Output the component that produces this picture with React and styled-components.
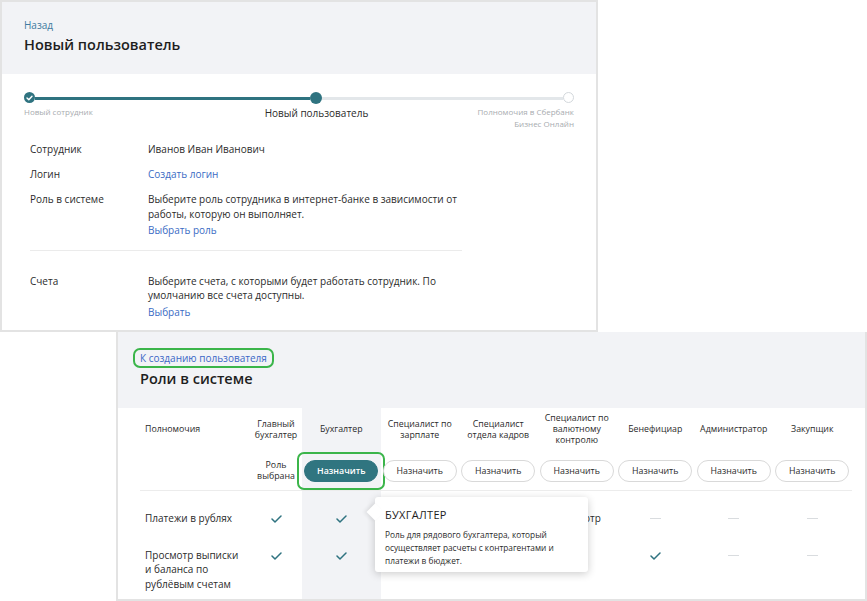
import React from 'react';
import styled, { createGlobalStyle } from 'styled-components';

const GlobalStyle = createGlobalStyle`
  body {
    margin: 0;
    background: #ffffff;
    font-family: "Open Sans", "Noto Sans", Arial, sans-serif;
    color: #2b2b2b;
  }
  * { box-sizing: border-box; }
`;

const Page = styled.div`
  width: 867px;
  height: 601px;
  overflow: hidden;
`;

const Window = styled.div`
  width: ${p => p.$width}px;
  height: ${p => p.$height}px;
  margin-left: ${p => p.$left || 0}px;
  border: 2px solid #e3e3e3;
  border-top-width: ${p => (p.$noTop ? 0 : 2)}px;
  background: #fff;
  overflow: hidden;
`;

const Header = styled.div`
  display: flex;
  flex-direction: column;
  align-items: flex-start;
  background: #f2f3f6;
  height: ${p => p.$height}px;
  padding: ${p => p.$top}px 22px 0;
`;

const BackLink = styled.a`
  display: block;
  font-size: 10px;
  line-height: 14px;
  color: ${p => p.$color || '#3e7aa0'};
  text-decoration: none;
`;

const Marked = styled.span`
  display: inline-block;
  border: 2px solid #3bb54a;
  border-radius: 7px;
  padding: ${p => p.$pad || '1px 5px'};
  margin: ${p => p.$margin || '0'};
`;

const Title = styled.h1`
  margin: ${p => p.$mt}px 0 0;
  font-size: 14.5px;
  line-height: 20px;
  font-weight: 600;
  color: #1e1e1e;
`;

/* stepper */
const Stepper = styled.div`
  display: flex;
  align-items: flex-start;
  padding: 18px 22px 0;
  height: 57px;
`;

const Step = styled.div`
  display: flex;
  flex-direction: column;
  align-items: ${p => p.$align};
  width: ${p => p.$size}px;
  flex: none;
`;

const Dot = styled.span`
  display: flex;
  align-items: center;
  justify-content: center;
  width: ${p => p.$size}px;
  height: ${p => p.$size}px;
  border-radius: 50%;
  background: ${p => (p.$filled ? '#2f7380' : '#fff')};
  border: ${p => (p.$filled ? 'none' : '1.5px solid #d3d8dc')};
`;

const Segment = styled.span`
  flex: ${p => p.$grow};
  height: 3px;
  margin-top: 4.5px;
  background: ${p => (p.$active ? '#2f7380' : '#e3e7ea')};
`;

const StepLabel = styled.span`
  margin-top: ${p => (p.$current ? 2 : 3)}px;
  white-space: nowrap;
  font-size: ${p => (p.$current ? 10 : 8)}px;
  line-height: ${p => (p.$current ? 14 : 12)}px;
  color: ${p => (p.$current ? '#2b2b2b' : '#a8acaf')};
  text-align: ${p => p.$textAlign || 'left'};
`;

/* form */
const Form = styled.div`
  width: 460px;
  padding-left: 28px;
`;

const FormRow = styled.div`
  display: grid;
  grid-template-columns: 118px 314px;
  padding: ${p => p.$pad};
  border-bottom: ${p => (p.$divider ? '1.5px solid #ebebeb' : 'none')};
  font-size: 10px;
  line-height: 14.5px;
`;

const FieldLabel = styled.span`
  color: #2b2b2b;
`;

const FieldValue = styled.div`
  color: #2b2b2b;
`;

const Link = styled.a`
  display: block;
  margin-top: ${p => p.$mt || 0}px;
  color: #3a6bc4;
  text-decoration: none;
`;

/* roles table */
const TableWrap = styled.div`
  position: relative;
  padding-left: 22px;
`;

const Table = styled.div`
  display: grid;
  grid-template-columns: 110px 52px repeat(7, 78.5px);
`;

const Cell = styled.div`
  display: flex;
  justify-content: ${p => (p.$first ? 'flex-start' : 'center')};
  align-items: ${p => p.$valign || 'center'};
  height: ${p => (p.$h ? `${p.$h}px` : 'auto')};
  padding: ${p => p.$pad || '0'};
  padding-left: ${p => (p.$first ? 5 : 0)}px;
  background: ${p => (p.$selected ? '#f2f3f6' : 'transparent')};
  border-bottom: ${p => (p.$divider ? '1px solid #ececec' : 'none')};
  text-align: ${p => (p.$first ? 'left' : 'center')};
  font-size: 10px;
  line-height: 14.5px;
  color: #2b2b2b;
`;

const RoleName = styled.span`
  font-size: 8.8px;
  line-height: 11px;
  white-space: pre-line;
`;

const RightName = styled.span`
  max-width: 100px;
`;

const AssignButton = styled.button`
  width: 74px;
  height: 22px;
  border-radius: 11px;
  font-family: inherit;
  font-size: 8.8px;
  font-weight: ${p => (p.$primary ? 600 : 400)};
  color: ${p => (p.$primary ? '#fff' : '#2b2b2b')};
  background: ${p => (p.$primary ? '#307580' : '#fff')};
  border: 1px solid ${p => (p.$primary ? '#307580' : '#d9d9d9')};
  padding: 0;
  cursor: pointer;
`;

const Dash = styled.span`
  display: block;
  width: 11px;
  height: 1px;
  margin-top: 7px;
  background: #d9dcdf;
`;

const Tooltip = styled.div`
  position: absolute;
  left: 257px;
  top: 89px;
  width: 213px;
  height: 75px;
  background: #fff;
  border-radius: 3px;
  box-shadow: 0 2px 8px rgba(0, 0, 0, 0.2);
  padding: 10px 10px 0;
  &::before {
    content: '';
    position: absolute;
    left: -6px;
    top: 9px;
    width: 12px;
    height: 12px;
    background: #fff;
    transform: rotate(45deg);
    box-shadow: -2px 2px 4px rgba(0, 0, 0, 0.08);
  }
`;

const TooltipTitle = styled.div`
  position: relative;
  font-size: 11px;
  line-height: 16px;
  letter-spacing: 0.3px;
  color: #1e1e1e;
`;

const TooltipText = styled.div`
  position: relative;
  margin-top: 5px;
  font-size: 8.3px;
  line-height: 13px;
  color: #2b2b2b;
`;

const Check = () => (
  <svg width="11" height="8" viewBox="0 0 11 8" style={{ marginTop: 4 }}>
    <path d="M1 4 L4 7 L10 1" fill="none" stroke="#2f7380" strokeWidth="1.5" strokeLinecap="round" strokeLinejoin="round" />
  </svg>
);

const roles = [
  'Главный\nбухгалтер',
  'Бухгалтер',
  'Специалист по\nзарплате',
  'Специалист\nотдела кадров',
  'Специалист по\nвалютному\nконтролю',
  'Бенефициар',
  'Администратор',
  'Закупщик',
];

const rights = [
  { name: 'Платежи в рублях', pad: '20px 0 11px', cells: ['v', 'v', '-', '-', 'Просмотр', '-', '-', '-'] },
  { name: 'Просмотр выписки и баланса по рублёвым счетам', pad: '11px 0', cells: ['v', 'v', '-', '-', '-', 'v', '-', '-'] },
];

const SELECTED = 1;

function Mark({ value }) {
  if (value === 'v') return <Check />;
  if (value === '-') return <Dash />;
  return <span>{value}</span>;
}

export default function App() {
  return (
    <Page>
      <GlobalStyle />
      <Window $width={598} $height={332}>
        <Header $height={72} $top={16}>
          <BackLink>Назад</BackLink>
          <Title $mt={3}>Новый пользователь</Title>
        </Header>
        <Stepper>
          <Step $size={11} $align="flex-start">
            <Dot $size={11} $filled>
              <svg width="7" height="6" viewBox="0 0 7 6">
                <path d="M1 3 L2.8 4.8 L6 1.2" fill="none" stroke="#fff" strokeWidth="1.4" strokeLinecap="round" strokeLinejoin="round" />
              </svg>
            </Dot>
            <StepLabel>Новый сотрудник</StepLabel>
          </Step>
          <Segment $grow={276} $active />
          <Step $size={12} $align="center">
            <Dot $size={12} $filled />
            <StepLabel $current>Новый пользователь</StepLabel>
          </Step>
          <Segment $grow={241} />
          <Step $size={11} $align="flex-end">
            <Dot $size={11} />
            <StepLabel $textAlign="right">
              Полномочия в Сбербанк
              <br />
              Бизнес Онлайн
            </StepLabel>
          </Step>
        </Stepper>
        <Form>
          <FormRow $pad="11px 0 5px">
            <FieldLabel>Сотрудник</FieldLabel>
            <FieldValue>Иванов Иван Иванович</FieldValue>
          </FormRow>
          <FormRow $pad="5px 0 6px">
            <FieldLabel>Логин</FieldLabel>
            <FieldValue>
              <Link>Создать логин</Link>
            </FieldValue>
          </FormRow>
          <FormRow $pad="5px 0 12px" $divider>
            <FieldLabel>Роль в системе</FieldLabel>
            <FieldValue>
              Выберите роль сотрудника в интернет-банке в зависимости от работы, которую он выполняет.
              <Link $mt={2}>Выбрать роль</Link>
            </FieldValue>
          </FormRow>
          <FormRow $pad="23px 0 0">
            <FieldLabel>Счета</FieldLabel>
            <FieldValue>
              Выберите счета, с которыми будет работать сотрудник. По умолчанию все счета доступны.
              <Link $mt={2}>Выбрать</Link>
            </FieldValue>
          </FormRow>
        </Form>
      </Window>

      <Window $width={751} $height={269} $left={116} $noTop>
        <Header $height={76} $top={16}>
          <Marked $margin="0 0 0 -7px">
            <BackLink $color="#3b67c6">К созданию пользователя</BackLink>
          </Marked>
          <Title $mt={1}>Роли в системе</Title>
        </Header>
        <TableWrap>
          <Table>
            <Cell $first $h={43}>
              <RoleName>Полномочия</RoleName>
            </Cell>
            {roles.map((r, i) => (
              <Cell key={r} $h={43} $selected={i === SELECTED}>
                <RoleName>{r}</RoleName>
              </Cell>
            ))}

            <Cell $first $h={40} $divider />
            {roles.map((r, i) => (
              <Cell key={r} $h={40} $divider $selected={i === SELECTED}>
                {i === 0 && <RoleName>{'Роль\nвыбрана'}</RoleName>}
                {i === SELECTED && (
                  <Marked $pad="6px 5px" $margin="0 -5px">
                    <AssignButton $primary>Назначить</AssignButton>
                  </Marked>
                )}
                {i > SELECTED && <AssignButton>Назначить</AssignButton>}
              </Cell>
            ))}

            {rights.map(row => (
              <React.Fragment key={row.name}>
                <Cell $first $valign="flex-start" $pad={row.pad}>
                  <RightName>{row.name}</RightName>
                </Cell>
                {row.cells.map((c, i) => (
                  <Cell key={i} $valign="flex-start" $pad={row.pad} $selected={i === SELECTED}>
                    <Mark value={c} />
                  </Cell>
                ))}
              </React.Fragment>
            ))}
          </Table>
          <Tooltip>
            <TooltipTitle>БУХГАЛТЕР</TooltipTitle>
            <TooltipText>
              Роль для рядового бухгалтера, который осуществляет расчеты с контрагентами и платежи в бюджет.
            </TooltipText>
          </Tooltip>
        </TableWrap>
      </Window>
    </Page>
  );
}
